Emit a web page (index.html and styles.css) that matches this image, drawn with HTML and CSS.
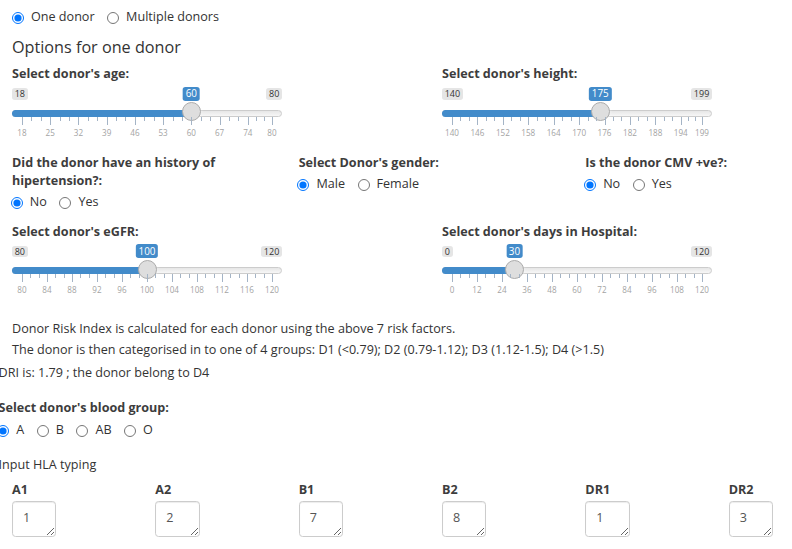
FILE: index.html
```html
<!DOCTYPE html>
<html lang="en">
<head>
<meta charset="utf-8">
<title>Donor options</title>
<link rel="stylesheet" href="styles.css">
</head>
<body>
<div class="page">
  <div class="radios top-radios">
    <label class="radio"><input type="radio" name="mode" checked><span>One donor</span></label>
    <label class="radio"><input type="radio" name="mode"><span>Multiple donors</span></label>
  </div>

  <h4 class="section-title">Options for one donor</h4>

  <div class="row row-sliders">
    <div class="col col-6">
      <label class="control-label">Select donor's age:</label>
      <div class="irs" data-min="18" data-max="80" data-step="7" style="--f:0.6774">
        <span class="irs-min">18</span>
        <span class="irs-max">80</span>
        <span class="irs-line"></span>
        <span class="irs-bar"></span>
        <span class="irs-handle"></span>
        <span class="irs-single">60</span>
        <div class="irs-grid"></div>
      </div>
    </div>
    <div class="col col-6">
      <label class="control-label">Select donor's height:</label>
      <div class="irs" data-min="140" data-max="199" data-step="6" style="--f:0.5932">
        <span class="irs-min">140</span>
        <span class="irs-max">199</span>
        <span class="irs-line"></span>
        <span class="irs-bar"></span>
        <span class="irs-handle"></span>
        <span class="irs-single">175</span>
        <div class="irs-grid"></div>
      </div>
    </div>
  </div>

  <div class="row row-questions">
    <div class="col col-4">
      <label class="control-label">Did the donor have an history of hipertension?:</label>
      <div class="radios group-radios">
        <label class="radio"><input type="radio" name="htn" checked><span>No</span></label>
        <label class="radio"><input type="radio" name="htn"><span>Yes</span></label>
      </div>
    </div>
    <div class="col col-4">
      <label class="control-label">Select Donor's gender:</label>
      <div class="radios group-radios">
        <label class="radio"><input type="radio" name="gender" checked><span>Male</span></label>
        <label class="radio"><input type="radio" name="gender"><span>Female</span></label>
      </div>
    </div>
    <div class="col col-4">
      <label class="control-label">Is the donor CMV +ve?:</label>
      <div class="radios group-radios">
        <label class="radio"><input type="radio" name="cmv" checked><span>No</span></label>
        <label class="radio"><input type="radio" name="cmv"><span>Yes</span></label>
      </div>
    </div>
  </div>

  <div class="row row-sliders2">
    <div class="col col-6">
      <label class="control-label">Select donor's eGFR:</label>
      <div class="irs" data-min="80" data-max="120" data-step="4" style="--f:0.5">
        <span class="irs-min">80</span>
        <span class="irs-max">120</span>
        <span class="irs-line"></span>
        <span class="irs-bar"></span>
        <span class="irs-handle"></span>
        <span class="irs-single">100</span>
        <div class="irs-grid"></div>
      </div>
    </div>
    <div class="col col-6">
      <label class="control-label">Select donor's days in Hospital:</label>
      <div class="irs" data-min="0" data-max="120" data-step="12" style="--f:0.25">
        <span class="irs-min">0</span>
        <span class="irs-max">120</span>
        <span class="irs-line"></span>
        <span class="irs-bar"></span>
        <span class="irs-handle"></span>
        <span class="irs-single">30</span>
        <div class="irs-grid"></div>
      </div>
    </div>
  </div>

  <div class="notes">
    <p class="note">Donor Risk Index is calculated for each donor using the above 7 risk factors.</p>
    <p class="note">The donor is then categorised in to one of 4 groups: D1 (&lt;0.79); D2 (0.79-1.12); D3 (1.12-1.5); D4 (&gt;1.5)</p>
  </div>
  <div class="flush dri">DRI is: 1.79 ; the donor belong to D4</div>

  <div class="flush blood">
    <label class="control-label">Select donor's blood group:</label>
    <div class="radios blood-radios">
      <label class="radio"><input type="radio" name="blood" checked><span>A</span></label>
      <label class="radio"><input type="radio" name="blood"><span>B</span></label>
      <label class="radio"><input type="radio" name="blood"><span>AB</span></label>
      <label class="radio"><input type="radio" name="blood"><span>O</span></label>
    </div>
  </div>

  <div class="flush hla-title">Input HLA typing</div>

  <div class="row row-hla">
    <div class="col col-2"><label class="control-label">A1</label><textarea class="hla-input">1</textarea></div>
    <div class="col col-2"><label class="control-label">A2</label><textarea class="hla-input">2</textarea></div>
    <div class="col col-2"><label class="control-label">B1</label><textarea class="hla-input">7</textarea></div>
    <div class="col col-2"><label class="control-label">B2</label><textarea class="hla-input">8</textarea></div>
    <div class="col col-2"><label class="control-label">DR1</label><textarea class="hla-input">1</textarea></div>
    <div class="col col-2"><label class="control-label">DR2</label><textarea class="hla-input">3</textarea></div>
  </div>
</div>
<script src="script.js"></script>
</body>
</html>
```
FILE: styles.css
```css
* { box-sizing: border-box; }
html, body { margin: 0; padding: 0; overflow: hidden; background: #fff; }
body {
  font-family: "Open Sans", "Liberation Sans", sans-serif;
  font-size: 12.6px;
  line-height: 18px;
  color: #333;
}
.page { width: 860px; margin-left: -3px; }

/* radios */
.radios { display: flex; align-items: center; gap: 12.5px; height: 18px; }
.radio { display: inline-flex; align-items: center; gap: 7px; }
.radio input { width: 12px; height: 12px; margin: 2px 0 0; }
.top-radios { padding-top: 7.8px; height: 25.8px; margin-left: 15px; }
.group-radios { margin-top: 3px; margin-left: -1.2px; }
.blood-radios { margin-top: 3.6px; margin-left: -1.2px; }

.section-title {
  font-size: 16.2px;
  line-height: 17.8px;
  font-weight: 400;
  margin: 13.6px 15px 0;
}

.row { display: flex; }
.col { padding: 0 15px; flex: none; }
.col-6 { width: 430px; }
.col-4 { width: 286.67px; }
.col-2 { width: 143.33px; }

.control-label { display: block; font-weight: 700; color: #3d3d3d; }

.row-sliders { margin-top: 8.2px; }
.row-questions { margin-top: 13.4px; }
.row-sliders2 { margin-top: 11.5px; }
.row-sliders .control-label,
.row-sliders2 .control-label { margin-bottom: 3.6px; }

/* ion range slider (shiny skin) */
.irs { position: relative; width: 270px; height: 54px; }
.irs-min, .irs-max {
  position: absolute;
  top: 1.3px;
  font-size: 9px;
  line-height: 11.7px;
  padding: 0 2.7px;
  color: #333;
  background: rgba(0, 0, 0, 0.1);
  border-radius: 2.7px;
}
.irs-min { left: 0; }
.irs-max { right: 0; }
.irs-line {
  position: absolute;
  left: 0; right: 0; top: 23px;
  height: 7px;
  border: 1px solid #cccccc;
  border-radius: 7px;
  background: linear-gradient(to bottom, #dedede -50%, #fff 150%);
}
.irs-bar {
  position: absolute;
  left: 0; top: 23px;
  height: 7px;
  width: calc(10px + (100% - 20px) * var(--f));
  background: #428bca;
  border-radius: 7px 0 0 7px;
}
.irs-handle {
  position: absolute;
  top: 15.5px;
  left: calc(10px + (100% - 20px) * var(--f) - 9.5px);
  width: 19px; height: 19px;
  border: 1px solid #ababab;
  background: #dedede;
  border-radius: 50%;
  box-shadow: 1px 1px 3px rgba(255, 255, 255, 0.3);
}
.irs-single {
  position: absolute;
  top: 0;
  left: calc(10px + (100% - 20px) * var(--f));
  transform: translateX(-50%);
  font-size: 9.9px;
  line-height: 13.2px;
  padding: 0.4px 2.7px;
  color: #fff;
  background: #428bca;
  border-radius: 2.7px;
}
.irs-grid { position: absolute; left: 10px; right: 10px; top: 30px; height: 24px; }
.irs-grid-pol {
  position: absolute;
  top: 0;
  width: 1px;
  height: 8px;
  background: #a4b4c6;
}
.irs-grid-pol.small { height: 4px; }
.irs-grid-text {
  position: absolute;
  top: 11px;
  transform: translateX(-50%);
  font-size: 8.1px;
  line-height: 10px;
  color: #a3a3a3;
  white-space: nowrap;
}

/* notes */
.notes { margin-top: 21.6px; padding: 0 15px; }
.note { margin: 0 0 3.4px; }
.flush { padding-left: 1.5px; }
.dri { margin-top: 4.9px; }
.blood { margin-top: 16.6px; }
.hla-title { margin-top: 17.8px; }

.row-hla { margin-top: 7px; }
.hla-input {
  display: block;
  width: 44.3px;
  height: 35.7px;
  margin-top: 2px;
  padding: 7px 10px 0;
  font-family: "Open Sans", "Liberation Sans", sans-serif;
  font-size: 12.6px;
  line-height: 18px;
  color: #555;
  border: 1px solid #cccccc;
  border-radius: 3.6px;
  box-shadow: inset 0 1px 1px rgba(0, 0, 0, 0.075);
  resize: both;
  overflow: hidden;
  background: #fff;
}
```
FILE: script.js
```js
document.querySelectorAll('.irs').forEach(function (slider) {
  var min = Number(slider.dataset.min);
  var max = Number(slider.dataset.max);
  var step = Number(slider.dataset.step);
  var grid = slider.querySelector('.irs-grid');
  var range = max - min;
  var total = Math.ceil(range / step);
  var bigW = step / range * 100;
  var prev = 0;

  function pol(p, small) {
    var el = document.createElement('span');
    el.className = small ? 'irs-grid-pol small' : 'irs-grid-pol';
    el.style.left = p + '%';
    grid.appendChild(el);
  }

  for (var i = 0; i <= total; i++) {
    var p = Math.min(bigW * i, 100);
    if (i > 0) {
      var sp = (p - prev) / 3;
      pol(p - sp, true);
      pol(p - sp * 2, true);
    }
    pol(p, false);
    var t = document.createElement('span');
    t.className = 'irs-grid-text';
    t.style.left = p + '%';
    t.textContent = String(Math.round(min + range * p / 100));
    grid.appendChild(t);
    prev = p;
  }
});
```
